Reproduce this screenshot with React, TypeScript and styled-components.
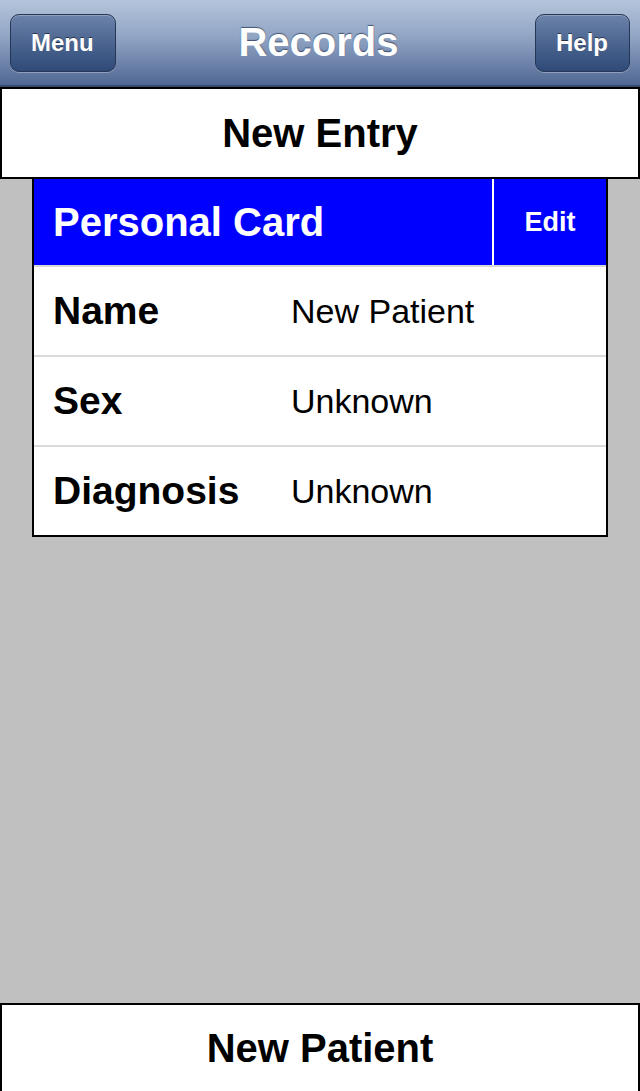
import React from 'react';
import styled, { createGlobalStyle } from 'styled-components';

const GlobalStyle = createGlobalStyle`
  html, body {
    margin: 0;
    padding: 0;
    overflow: hidden;
    background: #c0c0c0;
  }
  body {
    font-family: "Liberation Sans", Arial, Helvetica, sans-serif;
  }
`;

const rows = [
    { label: 'Name', value: 'New Patient' },
    { label: 'Sex', value: 'Unknown' },
    { label: 'Diagnosis', value: 'Unknown' },
];

const App = () => {
    return (
        <Screen>
            <GlobalStyle />
            <NavBar>
                <NavButton>Menu</NavButton>
                <NavTitle>Records</NavTitle>
                <NavButton align="end">Help</NavButton>
            </NavBar>
            <WideButton>New Entry</WideButton>
            <Card>
                <CardHeader>
                    <CardTitle>Personal Card</CardTitle>
                    <EditCell>Edit</EditCell>
                </CardHeader>
                {rows.map((row) => (
                    <Row key={row.label}>
                        <RowLabel>{row.label}</RowLabel>
                        <RowValue>{row.value}</RowValue>
                    </Row>
                ))}
            </Card>
            <WideButton bottom>New Patient</WideButton>
        </Screen>
    );
}

export default App;

const Screen = styled.div`
  height: 1093px;
  display: flex;
  flex-direction: column;
  background: #c0c0c0;
`;

const NavBar = styled.div`
  height: 87px;
  box-sizing: border-box;
  border-bottom: 2px solid #34496e;
  padding: 0 10px;
  display: grid;
  grid-template-columns: 1fr auto 1fr;
  align-items: center;
  background: linear-gradient(to bottom, #b4c4da 0%, #94a8c6 40%, #7388ae 70%, #4f6792 100%);
`;

const NavTitle = styled.div`
  color: #fff;
  font-weight: bold;
  font-size: 40px;
  text-shadow: 0 -1px 1px rgba(30, 45, 75, 0.7);
  margin-right: 3px;
`;

const NavButton = styled.div<{ align?: string }>`
  justify-self: ${({ align }) => align || 'start'};
  height: 58px;
  box-sizing: border-box;
  padding: 0 21px 0 20px;
  display: flex;
  align-items: center;
  color: #fff;
  font-weight: bold;
  font-size: 24px;
  border: 1px solid #263655;
  border-radius: 9px;
  background: linear-gradient(to bottom, #6c83aa 0%, #4b6590 50%, #2f4a78 100%);
  box-shadow: inset 0 1px 0 rgba(255, 255, 255, 0.25), 0 1px 0 rgba(255, 255, 255, 0.3);
  text-shadow: 0 -1px 0 rgba(0, 0, 0, 0.5);
`;

const WideButton = styled.div<{ bottom?: boolean }>`
  flex-shrink: 0;
  box-sizing: border-box;
  border: 2px solid #000;
  background: #fff;
  display: flex;
  align-items: center;
  justify-content: center;
  font-weight: bold;
  font-size: 40px;
  color: #000;
  margin-top: ${({ bottom }) => (bottom ? 'auto' : '0')};
  height: ${({ bottom }) => (bottom ? '90px' : '92px')};
`;

const Card = styled.div`
  width: 576px;
  margin: 0 auto;
  box-sizing: border-box;
  border: 2px solid #000;
  border-top: none;
  background: #fff;
`;

const CardHeader = styled.div`
  height: 86px;
  display: flex;
  background: #0000ff;
  color: #fff;
  font-weight: bold;
`;

const CardTitle = styled.div`
  flex: 1;
  display: flex;
  align-items: center;
  padding-left: 19px;
  font-size: 40px;
`;

const EditCell = styled.div`
  width: 112px;
  border-left: 2px solid #fff;
  display: flex;
  align-items: center;
  justify-content: center;
  font-size: 27px;
`;

const Row = styled.div`
  height: 88px;
  border-top: 2px solid #d9d9d9;
  display: flex;
  align-items: center;
  padding-left: 19px;
  color: #000;
`;

const RowLabel = styled.div`
  width: 238px;
  font-weight: bold;
  font-size: 39px;
`;

const RowValue = styled.div`
  font-size: 34px;
`;
